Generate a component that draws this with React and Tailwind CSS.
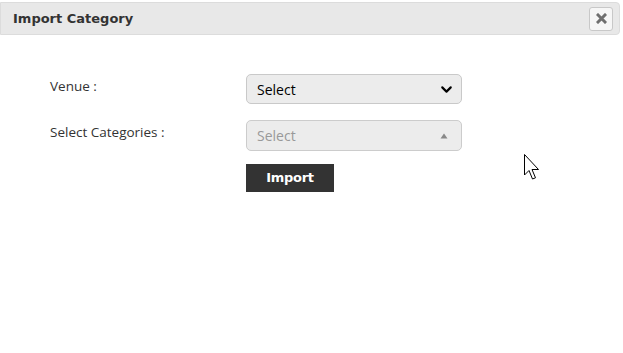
import { ChevronDown } from 'lucide-react';

// ─── Dialog header ────────────────────────────────────────────────────────────

function DialogHeader({ title }) {
  return (
    <div className="mx-0 mt-[2px] mr-[3px] h-[33px] flex items-center justify-between bg-[#e8e8e8] border border-[#dcdcdc] rounded-r-[4px] pl-[12px] pr-[6px]">
      <span className="text-[13px] font-bold text-[#333] font-['DejaVu_Sans',sans-serif]">{title}</span>
      <button className="w-[24px] h-[24px] flex items-center justify-center bg-[#f6f6f6] border border-[#c8c8c8] rounded-[3px]">
        <svg width="11" height="11" viewBox="0 0 11 11">
          <path d="M2 2 L9 9 M9 2 L2 9" stroke="#6f6f6f" strokeWidth="3" strokeLinecap="square" />
        </svg>
      </button>
    </div>
  );
}

// ─── Form row ─────────────────────────────────────────────────────────────────

function FormRow({ label, children }) {
  return (
    <div className="flex items-start">
      <label className="w-[196px] pt-[2px] text-[13.5px] text-[#333]">{label}</label>
      {children}
    </div>
  );
}

export default function App() {
  return (
    <div className="relative w-[623px] h-[353px] bg-white font-['Open_Sans','Liberation_Sans',sans-serif]">
      <DialogHeader title="Import Category" />

      <div className="pl-[50px] pt-[39px] flex flex-col">
        <FormRow label="Venue :">
          <div className="w-[216px] h-[30px] flex items-center justify-between bg-[#ececec] border border-[#c9c9c9] rounded-[5px] pl-[10px] pr-[6px]">
            <span className="text-[14px] text-black">Select</span>
            <ChevronDown size={17} strokeWidth={3} className="text-black" />
          </div>
        </FormRow>

        <div className="h-[16px]" />

        <FormRow label="Select Categories :">
          <div className="w-[216px] h-[31px] flex items-center justify-between bg-[#ececec] border border-[#cccccc] rounded-[5px] pl-[10px] pr-[13px]">
            <span className="text-[14px] text-[#999]">Select</span>
            <svg width="8" height="6" viewBox="0 0 8 6">
              <path d="M4 0.5 L7.5 5.5 L0.5 5.5 Z" fill="#888" />
            </svg>
          </div>
        </FormRow>

        <div className="flex mt-[13px]">
          <div className="w-[196px]" />
          <button className="w-[88px] h-[28px] bg-[#333] text-white text-[13px] font-bold font-['DejaVu_Sans',sans-serif] tracking-[-0.3px]">
            Import
          </button>
        </div>
      </div>

      {/* mouse pointer captured in the screenshot */}
      <svg className="absolute left-[524px] top-[152px]" width="20" height="28" viewBox="0 0 20 28">
        <path d="M0.5 0.5 L0.5 21 L5 16.5 L8.5 25 L11.5 23.8 L8 15.5 L14.5 15.5 Z" fill="white" stroke="black" strokeWidth="1" strokeLinejoin="miter" />
      </svg>
    </div>
  );
}
